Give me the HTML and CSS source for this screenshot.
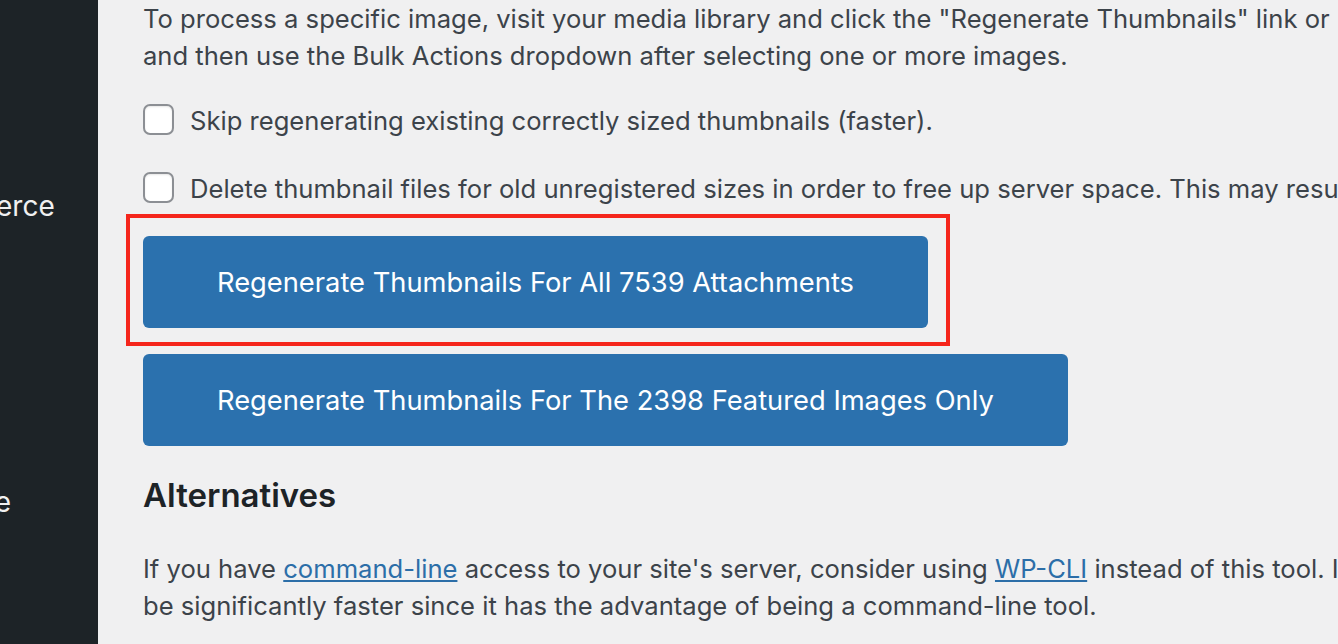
FILE: index.html
```html
<!DOCTYPE html>
<html>
<head>
	<title>Regenerate Thumbnails</title>
	<meta charset="utf-8">
	<meta name="viewport" content="width=device-width, initial-scale=1">
	<link rel="stylesheet" href="styles.css">
</head>
<body>
	<div class="adminmenu">
		<ul class="menu">
			<li class="menu-item"><span>WooCommerce</span></li>
			<li class="menu-item"><span>Appearance</span></li>
		</ul>
	</div>

	<div class="content">
		<p class="intro">To process a specific image, visit your media library and click the "Regenerate Thumbnails" link or button. To process multiple specific images, make sure you're in the list view<br>and then use the Bulk Actions dropdown after selecting one or more images.</p>

		<form id="regenerate-form">
			<label class="option">
				<input type="checkbox" class="check">
				<span>Skip regenerating existing correctly sized thumbnails (faster).</span>
			</label>
			<label class="option">
				<input type="checkbox" class="check">
				<span>Delete thumbnail files for old unregistered sizes in order to free up server space. This may result in broken images in your posts and pages.</span>
			</label>

			<div class="highlight">
				<button type="button" class="button-hero all">Regenerate Thumbnails For All 7539 Attachments</button>
			</div>
			<button type="button" class="button-hero featured">Regenerate Thumbnails For The 2398 Featured Images Only</button>
		</form>

		<h2>Alternatives</h2>
		<p class="alt">If you have <a href="#">command-line</a> access to your site's server, consider using <a href="#">WP-CLI</a> instead of this tool. It has a built-in regenerate command that works similarly to this tool but should<br>be significantly faster since it has the advantage of being a command-line tool.</p>
	</div>
</body>
</html>
```

FILE: styles.css
```css
html, body {
	margin: 0;
	height: 100%;
	overflow: hidden;
}

body {
	display: flex;
	background-color: #f0f0f1;
	font-family: Inter, "Noto Sans", sans-serif;
	color: #3c434a;
}

.adminmenu {
	width: 98px;
	flex-shrink: 0;
	background-color: #1d2327;
	overflow: hidden;
}

.menu {
	list-style: none;
	margin: 0;
	padding: 186px 0 0 0;
	display: flex;
	flex-direction: column;
	gap: 256px;
}

.menu-item {
	line-height: 40px;
	font-size: 28px;
	color: #f0f0f1;
	white-space: nowrap;
}

.menu-item span {
	display: inline-block;
	margin-left: -150px;
}

.content {
	flex: 1;
	padding-left: 45px;
	font-size: 25.6px;
	line-height: 37px;
	white-space: nowrap;
}

p {
	margin: 0;
}

.option {
	display: flex;
	align-items: center;
	gap: 16px;
	margin-top: 25px;
}

.option span {
	padding-top: 3px;
}

.option + .option {
	margin-top: 28px;
}

.check {
	appearance: none;
	-webkit-appearance: none;
	margin: 0;
	width: 31px;
	height: 31px;
	box-sizing: border-box;
	border: 2px solid #8c8f94;
	border-radius: 7px;
	background-color: #fff;
	box-shadow: inset 0 1px 2px rgba(0,0,0,0.1);
}

.highlight {
	position: relative;
	width: max-content;
	margin-top: 29px;
}

.highlight::after {
	content: "";
	position: absolute;
	left: -17px;
	top: -22px;
	right: -22px;
	bottom: -18px;
	border: 4px solid #f5261c;
	pointer-events: none;
}

.button-hero {
	display: block;
	height: 92px;
	padding: 0 74px;
	border: none;
	border-radius: 6px;
	background-color: #2b71ae;
	color: #fff;
	font-family: inherit;
	font-size: 27.3px;
	cursor: pointer;
}

.button-hero:hover {
	background-color: #135e96;
}

.featured {
	margin-top: 26px;
}

h2 {
	margin: 27px 0 0 0;
	font-size: 33px;
	font-weight: 600;
	line-height: 44px;
	color: #1d2327;
}

.alt {
	margin-top: 33px;
}

a {
	color: #2c6ea8;
}
```
